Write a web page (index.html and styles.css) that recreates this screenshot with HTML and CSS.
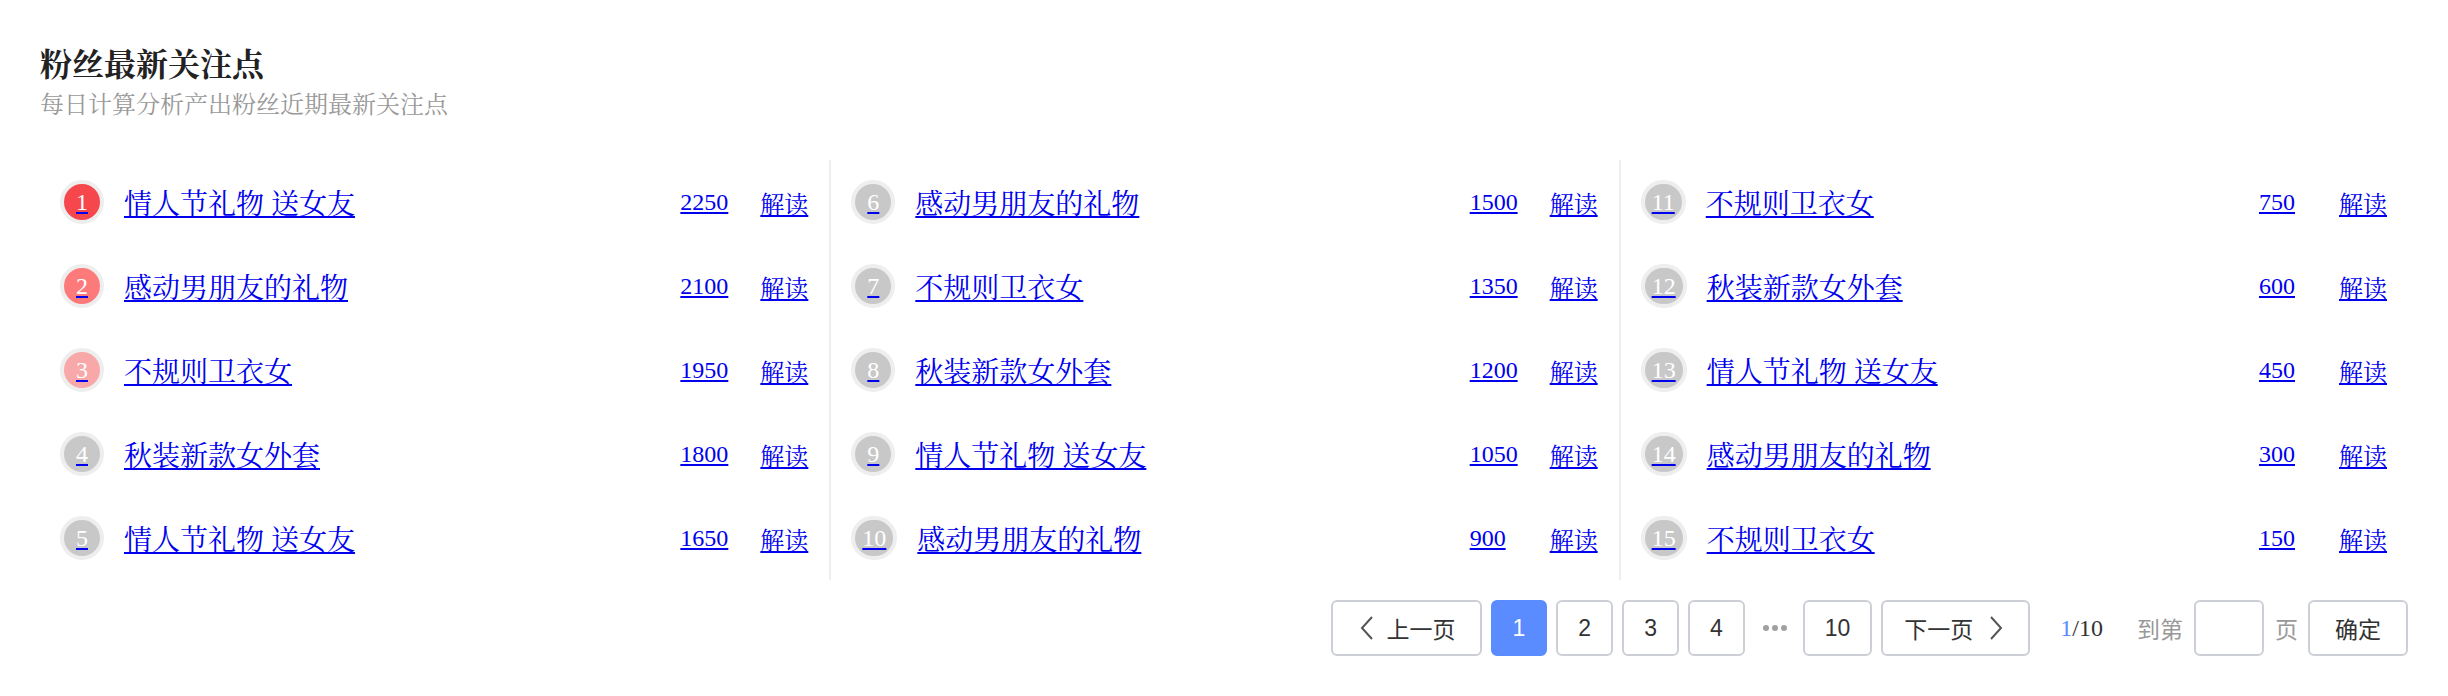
FILE: index.html
```html
<!DOCTYPE html>
<html lang="zh-CN">
<head>
<meta charset="utf-8">
<title>粉丝最新关注点</title>
<link rel="stylesheet" href="styles.css">
</head>
<body>
<div class="page">
  <header class="head">
    <h1 class="title">粉丝最新关注点</h1>
    <p class="sub">每日计算分析产出粉丝近期最新关注点</p>
  </header>

  <div class="board">
    <ul class="col">
      <li class="row"><a href="#" class="rank r1">1</a><a href="#" class="name">情人节礼物 送女友</a><a href="#" class="num">2250</a><a href="#" class="read">解读</a></li>
      <li class="row"><a href="#" class="rank r2">2</a><a href="#" class="name">感动男朋友的礼物</a><a href="#" class="num">2100</a><a href="#" class="read">解读</a></li>
      <li class="row"><a href="#" class="rank r3">3</a><a href="#" class="name">不规则卫衣女</a><a href="#" class="num">1950</a><a href="#" class="read">解读</a></li>
      <li class="row"><a href="#" class="rank">4</a><a href="#" class="name">秋装新款女外套</a><a href="#" class="num">1800</a><a href="#" class="read">解读</a></li>
      <li class="row"><a href="#" class="rank">5</a><a href="#" class="name">情人节礼物 送女友</a><a href="#" class="num">1650</a><a href="#" class="read">解读</a></li>
    </ul>
    <ul class="col">
      <li class="row"><a href="#" class="rank">6</a><a href="#" class="name">感动男朋友的礼物</a><a href="#" class="num">1500</a><a href="#" class="read">解读</a></li>
      <li class="row"><a href="#" class="rank">7</a><a href="#" class="name">不规则卫衣女</a><a href="#" class="num">1350</a><a href="#" class="read">解读</a></li>
      <li class="row"><a href="#" class="rank">8</a><a href="#" class="name">秋装新款女外套</a><a href="#" class="num">1200</a><a href="#" class="read">解读</a></li>
      <li class="row"><a href="#" class="rank">9</a><a href="#" class="name">情人节礼物 送女友</a><a href="#" class="num">1050</a><a href="#" class="read">解读</a></li>
      <li class="row"><a href="#" class="rank">10</a><a href="#" class="name">感动男朋友的礼物</a><a href="#" class="num">900</a><a href="#" class="read">解读</a></li>
    </ul>
    <ul class="col">
      <li class="row"><a href="#" class="rank">11</a><a href="#" class="name">不规则卫衣女</a><a href="#" class="num">750</a><a href="#" class="read">解读</a></li>
      <li class="row"><a href="#" class="rank">12</a><a href="#" class="name">秋装新款女外套</a><a href="#" class="num">600</a><a href="#" class="read">解读</a></li>
      <li class="row"><a href="#" class="rank">13</a><a href="#" class="name">情人节礼物 送女友</a><a href="#" class="num">450</a><a href="#" class="read">解读</a></li>
      <li class="row"><a href="#" class="rank">14</a><a href="#" class="name">感动男朋友的礼物</a><a href="#" class="num">300</a><a href="#" class="read">解读</a></li>
      <li class="row"><a href="#" class="rank">15</a><a href="#" class="name">不规则卫衣女</a><a href="#" class="num">150</a><a href="#" class="read">解读</a></li>
    </ul>
  </div>

  <nav class="pager">
    <button class="pg prev"><svg class="chev" width="15" height="26" viewBox="0 0 15 26"><path d="M13 2 L3 13 L13 24" fill="none" stroke="#555" stroke-width="2"/></svg><span>上一页</span></button>
    <button class="pg num-btn active">1</button>
    <button class="pg num-btn">2</button>
    <button class="pg num-btn">3</button>
    <button class="pg num-btn">4</button>
    <span class="dots"><i></i><i></i><i></i></span>
    <button class="pg num-btn">10</button>
    <button class="pg next"><span>下一页</span><svg class="chev" width="15" height="26" viewBox="0 0 15 26"><path d="M2 2 L12 13 L2 24" fill="none" stroke="#555" stroke-width="2"/></svg></button>
    <span class="count"><span class="cur">1</span>/10</span>
    <span class="goto">到第</span>
    <input class="jump" type="text">
    <span class="unit">页</span>
    <button class="pg ok">确定</button>
  </nav>
</div>
</body>
</html>
```

FILE: styles.css
```css
html, body {
  margin: 0;
  padding: 0;
  background: #fff;
}

.page {
  padding: 45px 40px 0;
  font-family: "Liberation Serif", "Noto Serif CJK SC", "Noto Sans CJK SC", serif;
}

.title {
  margin: 0;
  font-size: 32px;
  line-height: 40px;
  font-weight: 700;
  color: #222;
}

.sub {
  margin: 4px 0 0;
  font-size: 24px;
  line-height: 32px;
  color: #999;
}

.board {
  margin-top: 39px;
  display: grid;
  grid-template-columns: repeat(3, 1fr);
}

.col {
  list-style: none;
  margin: 0;
  padding: 0 21px 0 20px;
}

.col + .col {
  border-left: 2px solid #eeeeee;
}

.row {
  display: flex;
  align-items: center;
  height: 84px;
}

.row a {
  color: #0000ee;
}

.rank {
  display: inline-block;
  min-width: 22px;
  height: 36px;
  padding: 0 7px;
  box-sizing: content-box;
  border: 4px solid #eeeeee;
  border-radius: 22px;
  background: #c8c8c8;
  text-align: center;
  font-size: 24px;
  line-height: 36px;
  text-decoration-color: #0000ee;
  flex: none;
}

.row a.rank {
  color: #fff;
}

.rank.r1 { background: #f6474c; }
.rank.r2 { background: #fd7a7b; }
.rank.r3 { background: #f8a8a8; }

.name {
  flex: 1;
  margin-left: 20px;
  font-size: 28px;
  white-space: nowrap;
}

.num {
  width: 80px;
  flex: none;
  font-size: 24px;
}

.read {
  flex: none;
  font-size: 24px;
}

.pager {
  margin-top: 20px;
  display: flex;
  justify-content: flex-end;
  align-items: center;
  font-family: "Liberation Sans", "Noto Sans CJK SC", sans-serif;
  font-size: 23px;
  color: #333;
}

.pg {
  height: 56px;
  box-sizing: border-box;
  border: 2px solid #cdcfd6;
  border-radius: 6px;
  background: #fff;
  color: #333;
  font: inherit;
  display: inline-flex;
  align-items: center;
  justify-content: center;
  padding: 0 20px;
  margin: 0 0 0 9px;
}

.pg.active {
  background: #5a8bff;
  border-color: #5a8bff;
  color: #fff;
}

.prev {
  padding: 0 24px 0 26px;
}

.prev .chev {
  margin-right: 13px;
}

.next {
  padding: 0 24px 0 21px;
}

.next .chev {
  margin-left: 16px;
}

.dots {
  display: inline-flex;
  gap: 3px;
  margin: 0 7px 0 18px;
}

.dots i {
  width: 6px;
  height: 6px;
  border-radius: 50%;
  background: #a0a0a0;
}

.count {
  margin-left: 30px;
  font-family: "Liberation Serif", serif;
  font-size: 24px;
  color: #333;
}

.count .cur {
  color: #5a8bff;
}

.goto {
  margin-left: 34px;
  color: #999;
}

.jump {
  margin-left: 11px;
  width: 70px;
  height: 56px;
  box-sizing: border-box;
  border: 2px solid #cdcfd6;
  border-radius: 6px;
  padding: 0;
  outline: none;
}

.unit {
  margin-left: 11px;
  color: #999;
}

.ok {
  margin-left: 10px;
  padding: 0 25px;
}
```
